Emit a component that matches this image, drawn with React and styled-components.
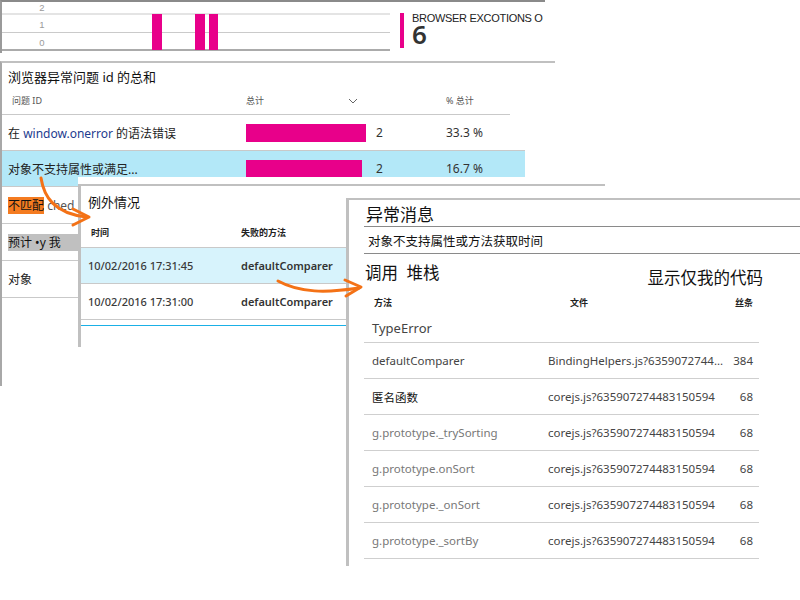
import React from 'react';
import styled, { createGlobalStyle } from 'styled-components';

const GlobalStyle = createGlobalStyle`
  html, body { margin: 0; padding: 0; background: #fff; }
  body {
    font-family: 'Noto Sans', 'Noto Sans CJK SC', sans-serif;
    color: #222;
  }
  * { box-sizing: border-box; }
`;

const Stage = styled.div`
  position: relative;
  width: 800px;
  height: 600px;
  overflow: hidden;
  background: #fff;
`;

// every blade is a window stacked over the previous one
const Blade = styled.section`
  position: absolute;
  top: ${p => p.$top}px;
  left: ${p => p.$left}px;
  width: ${p => p.$width}px;
  height: ${p => p.$height}px;
  background: #fff;
  padding-top: ${p => p.$gap || 0}px;
`;

const Frame = styled.div`
  height: 100%;
  border-top: 2px solid ${p => p.$edge || '#c0c0c0'};
  border-left: ${p => p.$side || 3}px solid ${p => p.$sideColor || '#c0c0c0'};
  display: flex;
  flex-direction: column;
`;

/* ---------- chart blade ---------- */

const ChartRow = styled.div`
  display: flex;
  align-items: flex-start;
`;

const Tile = styled.div`
  display: flex;
  margin: 11px 0 0 10px;
  gap: 8px;
`;

const TileMark = styled.div`
  width: 4px;
  height: 35px;
  background: #e8008a;
`;

const TileText = styled.div`
  display: flex;
  flex-direction: column;
`;

const TileLabel = styled.span`
  font-family: 'Liberation Sans', sans-serif;
  font-size: 11px;
  letter-spacing: -0.3px;
  line-height: 11px;
  color: #222;
`;

const TileValue = styled.span`
  font-family: 'Noto Sans', sans-serif;
  font-size: 26px;
  font-weight: 600;
  line-height: 20px;
  color: #333;
`;

/* ---------- summary blade ---------- */

const BladeTitle = styled.h2`
  margin: 0;
  font-weight: 400;
  font-size: ${p => p.$size || 13}px;
  line-height: 20px;
  padding: ${p => p.$pad || '4px 6px 0'};
  height: ${p => p.$h || 24}px;
  color: #111;
`;

const SumGrid = styled.div`
  display: grid;
  grid-template-columns: 244px 130px 70px 1fr;
  width: ${p => p.$w}px;
  align-items: center;
  height: ${p => p.$h}px;
  background: ${p => (p.$active ? '#b3e8f8' : 'transparent')};
  border-bottom: 1px solid #c9c9c9;
  font-size: 12px;
  color: #222;
`;

const HeadCell = styled.span`
  font-size: 9px;
  color: #555;
  padding-left: ${p => p.$pad || 0}px;
  display: flex;
  align-items: center;
  gap: 84px;
`;

const NameCell = styled.span`
  padding-left: 6px;
  white-space: nowrap;
  overflow: hidden;
`;

const Code = styled.span`
  color: #1d3c8f;
`;

const Mark = styled.span`
  background: ${p => p.$bg};
  color: #111;
  padding-right: ${p => p.$extra || 0}px;
`;

const Faded = styled.span`
  color: #555;
`;

const Bar = styled.div`
  height: 18px;
  background: #e8008a;
`;

const Num = styled.span`
  color: #333;
`;

/* ---------- exceptions blade ---------- */

const ExGrid = styled.div`
  display: grid;
  grid-template-columns: 153px 1fr;
  align-items: center;
  height: ${p => p.$h}px;
  background: ${p => (p.$active ? '#d7f3fc' : 'transparent')};
  border-bottom: ${p => (p.$line ? '1px solid #c9c9c9' : 'none')};
  padding-left: 7px;
  font-size: 11px;
  font-weight: 500;
  color: #3a3a3a;
`;

const SmallHead = styled.span`
  font-size: 9px;
  font-weight: 700;
  color: #222;
  padding-left: ${p => p.$pad || 0}px;
  padding-right: ${p => p.$right || 0}px;
  text-align: ${p => p.$align || 'left'};
`;

const Strong = styled.span`
  font-weight: 600;
  color: #333;
`;

const Accent = styled.div`
  margin-top: 5px;
  height: 1px;
  background: #1ab0e6;
`;

/* ---------- detail blade ---------- */

const Detail = styled.div`
  padding-left: 15px;
  display: flex;
  flex-direction: column;
`;

const Ruled = styled.div`
  height: ${p => p.$h}px;
  border-bottom: 1px solid #8a8a8a;
  display: flex;
  align-items: center;
  padding-left: ${p => p.$pad}px;
  font-size: ${p => p.$size}px;
  color: #111;
`;

const StackHead = styled.div`
  height: 36px;
  display: flex;
  justify-content: space-between;
  align-items: flex-start;
  padding: 6px 37px 0 1px;
  font-size: 16.5px;
  color: #111;
`;

const ShowMine = styled.span`
  margin-top: 5px;
`;

const StackTable = styled.div`
  width: 395px;
  display: flex;
  flex-direction: column;
`;

const StackGrid = styled.div`
  display: grid;
  grid-template-columns: 184px minmax(0, 1fr) 46px;
  align-items: center;
  height: ${p => p.$h}px;
  border-bottom: ${p => (p.$line ? '1px solid #cfcfcf' : 'none')};
  font-size: 11.5px;
`;

const Cell = styled.span`
  padding-left: ${p => p.$pad || 0}px;
  padding-right: ${p => p.$right || 0}px;
  text-align: ${p => p.$align || 'left'};
  color: ${p => p.$color || '#444'};
  font-size: ${p => (p.$size ? `${p.$size}px` : 'inherit')};
  white-space: nowrap;
`;

const Overlay = styled.svg`
  position: absolute;
  inset: 0;
  pointer-events: none;
`;

const issues = [
  { name: <>在 <Code>window.onerror</Code> 的语法错误</>, bar: 120, count: 2, pct: '33.3 %' },
  { name: '对象不支持属性或满足...', bar: 116, count: 2, pct: '16.7 %', active: true },
  { name: <><Mark $bg="#f47b20">不匹配</Mark><Faded> ched</Faded></> },
  { name: <Mark $bg="#c0c0c0" $extra={20}>预计 •y 我</Mark> },
  { name: '对象' },
];

const exceptions = [
  { time: '10/02/2016 17:31:45', method: 'defaultComparer', active: true },
  { time: '10/02/2016 17:31:00', method: 'defaultComparer' },
];

const frames = [
  { method: 'defaultComparer', file: 'BindingHelpers.js?6359072744...', line: 384, color: '#444' },
  { method: '匿名函数', file: 'corejs.js?635907274483150594', line: 68, color: '#111' },
  { method: 'g.prototype._trySorting', file: 'corejs.js?635907274483150594', line: 68, color: '#777' },
  { method: 'g.prototype.onSort', file: 'corejs.js?635907274483150594', line: 68, color: '#777' },
  { method: 'g.prototype._onSort', file: 'corejs.js?635907274483150594', line: 68, color: '#777' },
  { method: 'g.prototype._sortBy', file: 'corejs.js?635907274483150594', line: 68, color: '#777' },
];

function Chart() {
  return (
    <svg width="388" height="49" viewBox="0 0 388 49">
      <line x1="0" x2="388" y1="12" y2="12" stroke="#e4e4e4" strokeWidth="2" />
      <line x1="0" x2="388" y1="30.5" y2="30.5" stroke="#cacaca" strokeWidth="1" />
      <line x1="0" x2="388" y1="48" y2="48" stroke="#8f8f8f" strokeWidth="1.6" />
      <g fill="#9a9a9a" fontSize="9.5" fontFamily="Liberation Sans, sans-serif" textAnchor="middle">
        <text x="40" y="9">2</text>
        <text x="40" y="26">1</text>
        <text x="40" y="44">0</text>
      </g>
      <g fill="#e8008a">
        <rect x="150" y="12" width="10" height="36" />
        <rect x="193" y="12" width="10" height="36" />
        <rect x="207" y="12" width="9" height="36" />
      </g>
    </svg>
  );
}

function Chevron() {
  return (
    <svg width="10" height="6" viewBox="0 0 10 6">
      <polyline points="1,1 5,5 9,1" fill="none" stroke="#666" strokeWidth="1" />
    </svg>
  );
}

function App() {
  return (
    <Stage>
      <GlobalStyle />

      <Blade $top={0} $left={0} $width={545} $height={53}>
        <Frame $edge="#8a8a8a" $side={2} $sideColor="#9a9a9a">
          <ChartRow>
            <Chart />
            <Tile>
              <TileMark />
              <TileText>
                <TileLabel>BROWSER EXCOTIONS O</TileLabel>
                <TileValue>6</TileValue>
              </TileText>
            </Tile>
          </ChartRow>
        </Frame>
      </Blade>

      <Blade $top={61} $left={0} $width={555} $height={325}>
        <Frame $side={2} $sideColor="#a8a8a8">
          <BladeTitle>浏览器异常问题 id 的总和</BladeTitle>
          <SumGrid $w={508} $h={28}>
            <HeadCell $pad={10}>问题 ID</HeadCell>
            <HeadCell>总计<Chevron /></HeadCell>
            <span />
            <HeadCell>% 总计</HeadCell>
          </SumGrid>
          {issues.map((row, i) => (
            <SumGrid key={i} $w={523} $h={i < 2 ? 36 : 37} $active={row.active}>
              <NameCell>{row.name}</NameCell>
              {row.bar ? <Bar style={{ width: row.bar }} /> : <span />}
              <Num>{row.count}</Num>
              <Num>{row.pct}</Num>
            </SumGrid>
          ))}
        </Frame>
      </Blade>

      <Blade $top={177} $left={78} $width={527} $height={170} $gap={7}>
        <Frame>
          <BladeTitle $pad="6px 7px 0" $h={32}>例外情况</BladeTitle>
          <ExGrid $h={30} $line>
            <SmallHead $pad={3}>时间</SmallHead>
            <SmallHead>失败的方法</SmallHead>
          </ExGrid>
          {exceptions.map((row, i) => (
            <ExGrid key={i} $h={36} $line $active={row.active}>
              <span>{row.time}</span>
              <Strong>{row.method}</Strong>
            </ExGrid>
          ))}
          <Accent />
        </Frame>
      </Blade>

      <Blade $top={198} $left={346} $width={454} $height={368}>
        <Frame>
          <Detail>
            <Ruled $h={27} $pad={2} $size={17}>异常消息</Ruled>
            <Ruled $h={27} $pad={4} $size={12.5}>对象不支持属性或方法获取时间</Ruled>
            <StackHead>
              <span>调用&nbsp; 堆栈</span>
              <ShowMine>显示仅我的代码</ShowMine>
            </StackHead>
            <StackTable>
              <StackGrid $h={24}>
                <SmallHead $pad={10}>方法</SmallHead>
                <SmallHead $pad={22}>文件</SmallHead>
                <SmallHead $align="right" $right={6}>丝条</SmallHead>
              </StackGrid>
              <StackGrid $h={29} $line>
                <Cell $pad={8} $color="#444" $size={13}>TypeError</Cell>
              </StackGrid>
              {frames.map((f, i) => (
                <StackGrid key={i} $h={36} $line>
                  <Cell $pad={8} $color={f.color}>{f.method}</Cell>
                  <Cell>{f.file}</Cell>
                  <Cell $align="right" $right={6}>{f.line}</Cell>
                </StackGrid>
              ))}
            </StackTable>
          </Detail>
        </Frame>
      </Blade>

      <Overlay width="800" height="600" viewBox="0 0 800 600">
        <g fill="none" stroke="#f47216" strokeWidth="3" strokeLinecap="round" strokeLinejoin="round">
          <path d="M41 178 C44 197 54 213 86 217" />
          <path d="M73 209 L89 217 L73 225" />
          <path d="M278 281 C300 293 326 293 359 288" />
          <path d="M345 280 L361 287 L346 296" />
        </g>
      </Overlay>
    </Stage>
  );
}

export default App;
